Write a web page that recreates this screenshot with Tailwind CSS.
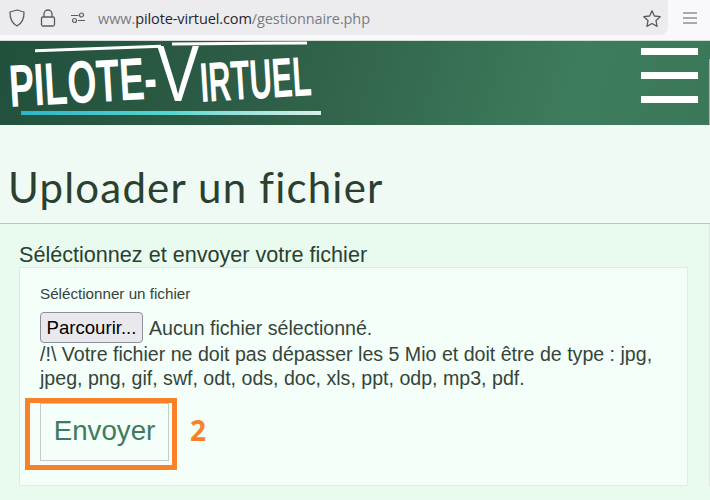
<!DOCTYPE html>
<html lang="fr">
<head>
<meta charset="utf-8">
<script src="https://cdn.jsdelivr.net/npm/@tailwindcss/browser@4"></script>
</head>
<body class="m-0 h-[500px] w-[710px] overflow-hidden bg-[#e9fbef] font-['Liberation_Sans',sans-serif] text-[#36443b]">
  <div class="flex h-[41px] items-start border-b border-[#d5dbd8] bg-[#f9f9fb]">
    <div class="flex h-[35px] w-[668px] items-center rounded-br-lg bg-[#ececee] text-[#5b5b66]">
      <svg class="ml-[8px] mt-px h-[18px] w-[18px]" viewBox="0 0 18 18" fill="none" stroke="currentColor" stroke-width="1.3"><path d="M9 1 L2 3 C1.8 9 3.4 14 9 17 C14.6 14 16.2 9 16 3 Z" stroke-linejoin="round"/></svg>
      <svg class="ml-[13px] mt-px h-[20px] w-[18px]" viewBox="0 0 18 20" fill="none" stroke="currentColor" stroke-width="1.3"><rect x="2.5" y="9" width="13" height="9" rx="1.5"/><path d="M5 9 V6 A4 4 0 0 1 13 6 V9"/></svg>
      <svg class="ml-[13px] mt-px h-[16px] w-[16px]" viewBox="0 0 16 16" fill="none" stroke="currentColor" stroke-width="1.2"><path d="M1 5.5 H8.5 M8 10.5 H15"/><circle cx="11.5" cy="5" r="2"/><circle cx="4.5" cy="10.5" r="2"/></svg>
      <div class="ml-[12px] mt-[2px] font-['Open_Sans',sans-serif] text-[14.5px] tracking-[-0.1px] text-[#7b7b84]">www.<span class="text-[#26262c]">pilote-virtuel.com</span>/gestionnaire.php</div>
      <svg class="ml-auto mr-[6px] mt-[2px] h-[20px] w-[20px]" viewBox="0 0 20 20" fill="none" stroke="currentColor" stroke-width="1.3" stroke-linejoin="round"><path d="M10 1.8 L12.4 7 L18.2 7.7 L14 11.6 L15.1 17.4 L10 14.5 L4.9 17.4 L6 11.6 L1.8 7.7 L7.6 7 Z"/></svg>
    </div>
    <svg class="ml-[14px] mt-[10px] h-[16px] w-[16px] text-[#5b5b66]" viewBox="0 0 16 16" stroke="currentColor" stroke-width="1.2"><path d="M1 3 H15 M1 8 H15 M1 13 H15"/></svg>
  </div>

  <header class="relative flex h-[84px] items-start justify-between bg-linear-[105deg,#21503c_0%,#2f5f48_40%,#3d7c5c_80%,#3a7859_100%]">
    <div class="relative h-full w-[340px]">
      <div class="absolute left-[35px] top-[6px] h-[3px] w-[126px] -rotate-2 bg-white"></div>
      <div class="absolute left-[172px] top-[1px] h-[3px] w-[135px] -rotate-[0.5deg] bg-white"></div>
      <div class="absolute left-[9px] top-[16px] origin-left -rotate-[3.3deg] scale-x-[0.625] whitespace-nowrap text-[60px] leading-none font-bold text-white">PILOTE-</div>
      <div class="absolute left-[157px] top-[-7px] origin-left scale-x-[0.8] text-[79px] leading-none text-white">V</div>
      <div class="absolute left-[200px] top-[14px] origin-left -rotate-[3.5deg] scale-x-[0.55] whitespace-nowrap text-[56px] leading-none font-bold text-white">IRTUEL</div>
      <div class="absolute left-[21px] top-[70px] h-[4px] w-[300px] bg-linear-to-r from-[#2fb4c8] via-[#55d6cf] to-[#d8f0ea]"></div>
    </div>
    <div class="mr-[12px] mt-[7px] flex flex-col gap-[17px]">
      <div class="h-[7px] w-[57px] bg-white"></div>
      <div class="h-[7px] w-[57px] bg-white"></div>
      <div class="h-[7px] w-[57px] bg-white"></div>
    </div>
    <div class="absolute right-0 top-[18px] h-[66px] w-px bg-[#a9b5ae]"></div>
  </header>

  <div class="h-[99px] border-b border-[#b9c6c6] bg-[#effaf4] pl-[8px] pt-[36px]">
    <h1 class="font-['Lato',sans-serif] text-[42px] leading-[52px] tracking-[1.2px] text-[#2a4030]">Uploader un fichier</h1>
  </div>

  <main class="relative border-r border-[#dfe9e4] pl-[19px] pr-[21px] pt-[18px]">
    <h2 class="text-[21.6px] leading-[25px] text-[#2a4030]">Séléctionnez et envoyer votre fichier</h2>
    <section class="h-[219px] border border-[#dcece8] bg-[#f3fff8] pl-[20px] pr-[10px] pt-[17px]">
      <label class="block text-[15.2px] leading-[18px]">Séléctionner un fichier</label>
      <div class="mt-[9px] flex items-center text-[19.6px] leading-[24px]">
        <button class="h-[31px] w-[103px] rounded-[4px] border border-[#8f8f9d] bg-[#e9e9ed] pt-px text-[18.6px] text-black">Parcourir...</button>
        <span class="ml-[6px] pt-px">Aucun fichier sélectionné.</span>
      </div>
      <p class="-mt-px text-[19.6px] leading-[24px]">/!\ Votre fichier ne doit pas dépasser les 5 Mio et doit être de type : jpg, jpeg, png, gif, swf, odt, ods, doc, xls, ppt, odp, mp3, pdf.</p>
      <div class="mt-[13px] flex items-center">
        <button class="h-[58px] w-[129px] border border-[#c4cbc7] pb-[2px] text-[27.7px] text-[#3f7a60]">Envoyer</button>
        <span class="mb-[4px] ml-[21px] font-['Open_Sans',sans-serif] text-[28px] font-bold text-[#f88129]">2</span>
      </div>
    </section>
    <div class="absolute left-[25px] top-[174px] h-[72px] w-[152px] border-[5px] border-[#f88129]"></div>
  </main>
</body>
</html>
